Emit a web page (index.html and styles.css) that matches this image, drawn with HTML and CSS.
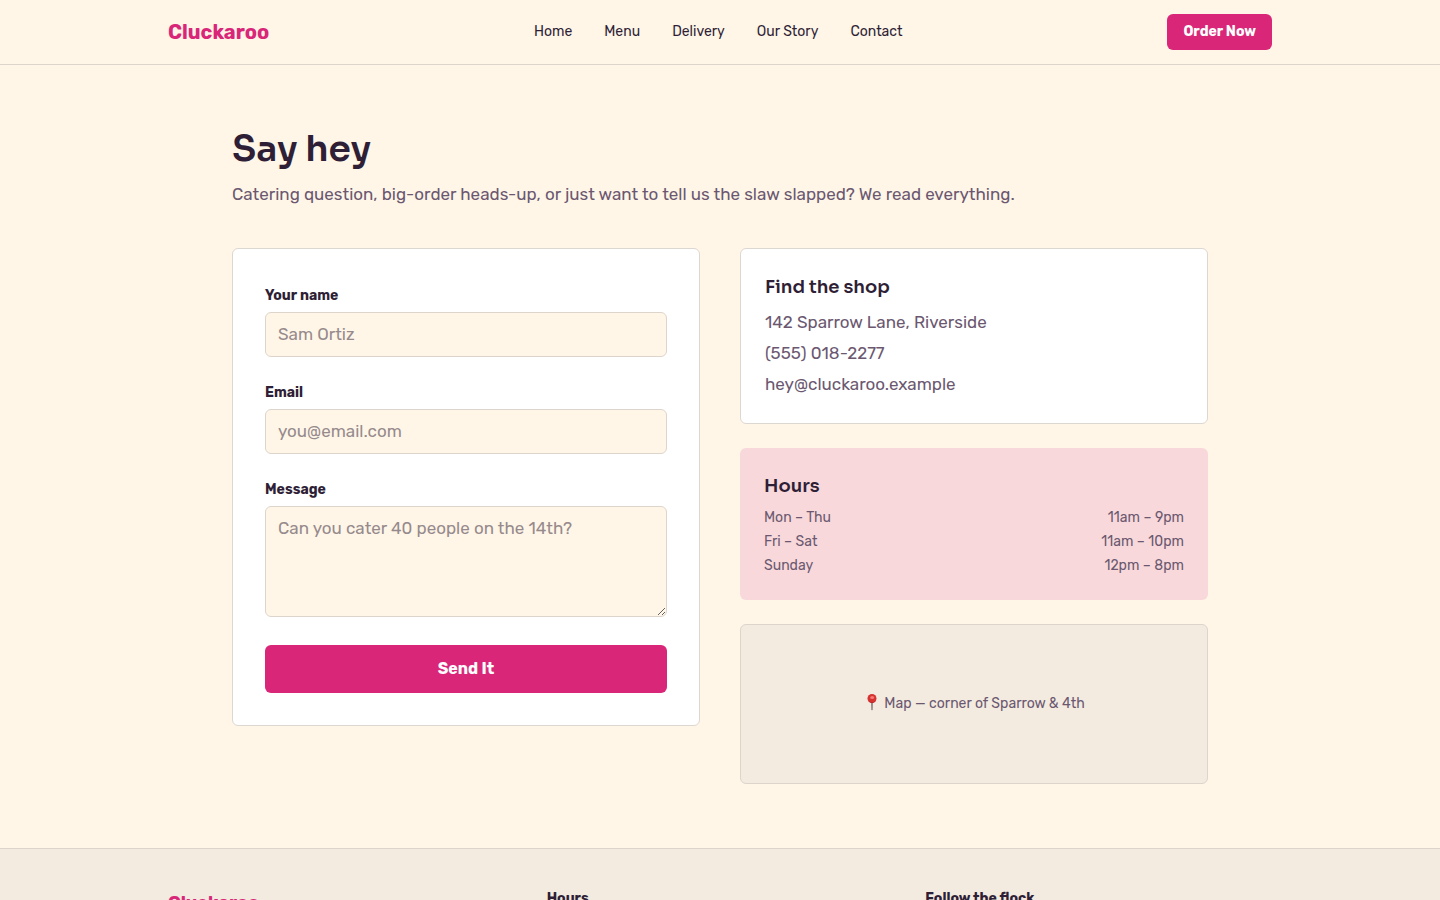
FILE: index.html
```html
<!DOCTYPE html>
<html lang="en">
<head>
    <meta charset="UTF-8">
    <meta name="viewport" content="width=device-width, initial-scale=1">
    <title>Contact - Cluckaroo</title>
    <link rel="stylesheet" href="styles.css">
</head>
<body>
    <header class="site-header">
        <div class="wrap header-inner">
            <a class="logo" href="#">Cluckaroo</a>
            <nav class="nav">
                <a href="#">Home</a>
                <a href="#">Menu</a>
                <a href="#">Delivery</a>
                <a href="#">Our Story</a>
                <a href="#">Contact</a>
            </nav>
            <a class="btn btn-small" href="#">Order Now</a>
        </div>
    </header>

    <main class="page">
        <h1>Say hey</h1>
        <p class="intro">Catering question, big-order heads-up, or just want to tell us the slaw slapped? We read everything.</p>

        <div class="columns">
            <form class="card contact-form">
                <div class="field">
                    <label for="name">Your name</label>
                    <input type="text" id="name" placeholder="Sam Ortiz">
                </div>
                <div class="field">
                    <label for="email">Email</label>
                    <input type="email" id="email" placeholder="you@email.com">
                </div>
                <div class="field">
                    <label for="message">Message</label>
                    <textarea id="message" placeholder="Can you cater 40 people on the 14th?"></textarea>
                </div>
                <button class="btn btn-send" type="submit">Send It</button>
            </form>

            <div class="info">
                <section class="card shop">
                    <h2>Find the shop</h2>
                    <ul class="shop-list">
                        <li>142 Sparrow Lane, Riverside</li>
                        <li>(555) 018-2277</li>
                        <li>hey@cluckaroo.example</li>
                    </ul>
                </section>

                <section class="hours">
                    <h2>Hours</h2>
                    <table class="hours-table">
                        <tr><td>Mon – Thu</td><td>11am – 9pm</td></tr>
                        <tr><td>Fri – Sat</td><td>11am – 10pm</td></tr>
                        <tr><td>Sunday</td><td>12pm – 8pm</td></tr>
                    </table>
                </section>

                <div class="map">
                    <svg class="pin" viewBox="-4 0 17 19" aria-hidden="true">
                        <path d="M4.2 8h1.6l-.2 7.6-.6 1-.6-1z" fill="#77706e"/>
                        <circle cx="5" cy="4.5" r="4.5" fill="#d6322f"/>
                        <path d="M1.2 6.7a4.4 4.4 0 0 0 7.6 0A5.5 5.5 0 0 1 1.2 6.7z" fill="#b32426"/>
                        <ellipse cx="5.2" cy="3.6" rx="2" ry="1.5" fill="#f37b73"/>
                    </svg>
                    <span>Map — corner of Sparrow &amp; 4th</span>
                </div>
            </div>
        </div>
    </main>

    <footer class="site-footer">
        <div class="wrap footer-inner">
            <a class="logo footer-logo" href="#">Cluckaroo</a>
            <h3>Hours</h3>
            <h3>Follow the flock</h3>
        </div>
    </footer>
</body>
</html>
```
FILE: styles.css
```css
* {
    box-sizing: border-box;
}
body {
    margin: 0;
    font-family: Rubik, Roboto, sans-serif;
    font-size: 17px;
    line-height: 27px;
    color: #2f1f36;
    background-color: #fff6e8;
}
a {
    color: inherit;
    text-decoration: none;
}
h1, h2, h3, p, ul {
    margin: 0;
}
.wrap {
    max-width: 1152px;
    margin: 0 auto;
    padding: 0 24px;
}

/* header */
.site-header {
    border-bottom: 1px solid #ddd5cb;
}
.header-inner {
    display: flex;
    align-items: center;
    justify-content: space-between;
    padding-top: 14px;
    padding-bottom: 14px;
}
.logo {
    font-size: 20px;
    line-height: 28px;
    font-weight: 700;
    color: #d92678;
}
.nav {
    display: flex;
    gap: 32px;
    padding-bottom: 2px;
    font-size: 14px;
}
.btn {
    display: block;
    border: none;
    border-radius: 6px;
    background-color: #d92678;
    color: white;
    font-family: inherit;
    font-weight: 700;
    text-align: center;
    cursor: pointer;
}
.btn:hover {
    background-color: #bd1e67;
}
.btn-small {
    padding: 6px 16px;
    font-size: 14px;
    line-height: 24px;
}

/* contact page */
.page {
    max-width: 1024px;
    margin: 0 auto;
    padding: 64px 24px;
}
h1 {
    font-family: Sora, Inter, sans-serif;
    font-size: 36px;
    line-height: 40px;
    font-weight: 600;
    margin-bottom: 12px;
}
h2 {
    font-family: Sora, Inter, sans-serif;
    font-size: 18px;
    line-height: 29px;
    font-weight: 600;
}
.intro {
    margin-bottom: 40px;
    color: #6b5870;
}
.columns {
    display: grid;
    grid-template-columns: 1fr 1fr;
    gap: 40px;
    align-items: start;
}
.card {
    background-color: white;
    border: 1px solid #ddd7d2;
    border-radius: 6px;
}
.contact-form {
    padding: 32px;
}
.field {
    margin-bottom: 21px;
}
label {
    display: block;
    margin-bottom: 2px;
    font-size: 14px;
    line-height: 29px;
    font-weight: 700;
}
input, textarea {
    display: block;
    width: 100%;
    padding: 8px 12px;
    border: 1px solid #ddd5cb;
    border-radius: 6px;
    background-color: #fff6e8;
    color: inherit;
    font-family: inherit;
    font-size: 17px;
    line-height: 27px;
}
textarea {
    height: 111px;
    resize: vertical;
}
::placeholder {
    color: #968a8c;
}
.btn-send {
    width: 100%;
    margin-top: 28px;
    padding: 12px;
    font-size: 16px;
    line-height: 24px;
}
.info {
    display: grid;
    gap: 24px;
}
.shop {
    padding: 24px 24px 23px;
}
.shop-list {
    margin-top: 5px;
    padding: 0;
    list-style: none;
    line-height: 31px;
    color: #6b5870;
}
.hours {
    padding: 24px 24px 22px;
    border-radius: 6px;
    background-color: #f8d8da;
}
.hours-table {
    width: 100%;
    margin-top: 5px;
    border-collapse: collapse;
    font-size: 14px;
    line-height: 24px;
    color: #6b5870;
}
.hours-table td {
    padding: 0;
}
.hours-table td:last-child {
    text-align: right;
}
.map {
    display: flex;
    align-items: center;
    justify-content: center;
    gap: 4px;
    height: 160px;
    padding-bottom: 2px;
    border: 1px solid #ddd5cb;
    border-radius: 6px;
    background-color: #f3ebe0;
    font-size: 14px;
    color: #6b5870;
}
.pin {
    width: 17px;
    height: 19px;
}

/* footer */
.site-footer {
    padding: 40px 0;
    border-top: 1px solid #ddd5cb;
    background-color: #f3ebe0;
}
.footer-inner {
    display: grid;
    grid-template-columns: repeat(3, 1fr);
    gap: 32px;
}
.footer-logo {
    font-size: 18px;
}
h3 {
    font-size: 14px;
    line-height: 20px;
    font-weight: 700;
}
```
